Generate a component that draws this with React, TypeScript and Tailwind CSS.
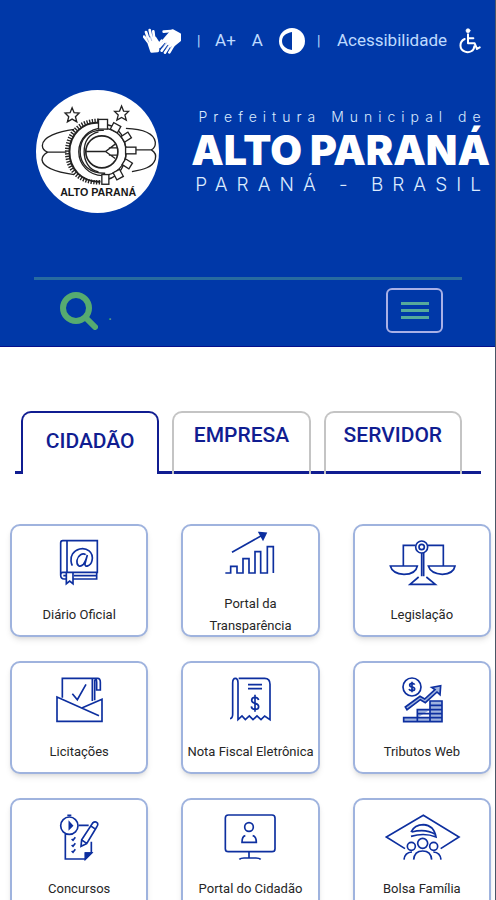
import { useState } from "react";
import type { ReactNode } from "react";
import clsx from "clsx";

interface Service {
  name: string;
  viewBox: string;
  icon: ReactNode;
}

const tabs = ["CIDADÃO", "EMPRESA", "SERVIDOR"];

const services: Service[] = [
  {
    name: "Diário Oficial",
    viewBox: "111 60 252 162",
    icon: (
      <>
        <path d="M188 77H292V172H188Q182 172 182 180V84Q182 77 188 77ZM201 77V172M182 180Q182 192 192 192H198M220 192H290V172M190 182H198M222 182H290M199 174V206L209 198L219 206V174" />
        <path d="M257 119C248 113 234 120 231 136C229 153 240 158 250 148C256 141 260 128 262 120L255 146C253 158 272 155 276 137C282 111 259 97 239 102C219 107 211 124 213 138Q214 147 217 152" />
      </>
    ),
  },
  {
    name: "Portal da Transparência",
    viewBox: "116 27 252 162",
    icon: (
      <>
        <path d="M168 174H184V154H203V174H221V131H239V174H257V110H274V174H294V95H312V174" />
        <path d="M188 112L280 60" />
        <path d="M270 53L290 55L281 73Z" fill="currentColor" />
      </>
    ),
  },
  {
    name: "Legislação",
    viewBox: "628 60 252 162",
    icon: (
      <>
        <circle cx="753" cy="96" r="18" />
        <circle cx="753" cy="96" r="8" />
        <path d="M735 91H698V153M771 91H818V153M659 153H740Q735 178 700 178Q665 176 659 153ZM773 153H853Q849 176 815 178Q780 176 773 153Z" />
        <path d="M753 114V184M759 114V184M744 186L718 208H794L767 186" />
      </>
    ),
  },
  {
    name: "Licitações",
    viewBox: "111 51 252 162",
    icon: (
      <>
        <path d="M187 128V70H277V138M277 70H293Q301 70 301 82V105H290V82Q290 70 282 70M284 74V136" />
        <path d="M297 182L171 126V199H306V133L247 158M217 116L232 134L258 88" />
      </>
    ),
  },
  {
    name: "Nota Fiscal Eletrônica",
    viewBox: "116 51 252 162",
    icon: (
      <>
        <path d="M182 191Q190 190 190 178V84Q190 70 198 70Q206 70 206 84V194L218 183L228 194L240 183L251 194L263 183L275 194L286 183L302 194V88Q302 70 286 70H208M236 89H278M236 101H278" />
        <path d="M268 135Q265 127 257 127Q247 127 247 136Q247 143 257 145Q268 147 268 155Q268 163 257 163Q247 163 246 154M257 119V170" />
      </>
    ),
  },
  {
    name: "Tributos Web",
    viewBox: "628 51 252 162",
    icon: (
      <>
        <circle cx="724" cy="96" r="27" />
        <path d="M732 89Q730 85 724 85Q717 85 717 90Q717 95 724 96Q732 97 732 102Q732 107 724 107Q717 107 715 102M724 80V112" />
        <path
          d="M704 156L748 124L762 132L793 104L783 97L810 92L808 119L799 111L764 143L749 134L709 164Z"
          fill="#9fb3de"
        />
        <path
          d="M699 188H814V200H699ZM740 188V164H778M740 176H814M778 188V138H814V188M778 151H814M778 164H814M740 188V200M778 188V200"
          fill="#9fb3de"
        />
      </>
    ),
  },
  {
    name: "Concursos",
    viewBox: "111 58 252 162",
    icon: (
      <>
        <circle cx="208" cy="108" r="26" />
        <path d="M208 80V76M202 77H214M236 107H266M196 133V208H256L274 190V156M274 190H256V208Z" />
        <path d="M208 98V117L217 108Z" fill="currentColor" />
        <path d="M278 100Q286 93 293 101Q295 106 290 112L260 162L243 170L245 150ZM271 108L284 117M247 152L260 161M215 148L219 152L226 143M215 166L219 170L226 161M215 184L219 188L226 179" />
        <path d="M257 190H274L257 207Z" fill="currentColor" />
      </>
    ),
  },
  {
    name: "Portal do Cidadão",
    viewBox: "116 58 252 162",
    icon: (
      <>
        <rect x="168" y="76" width="149" height="110" rx="9" />
        <circle cx="239" cy="112" r="13" />
        <path d="M228 138Q218 140 218 158H261Q261 140 250 138M239 187V206M210 209Q214 205 224 205H260Q270 205 274 209" />
      </>
    ),
  },
  {
    name: "Bolsa Família",
    viewBox: "628 58 252 162",
    icon: (
      <>
        <path d="M703 177L647 142L758 77L865 142L810 177" />
        <path d="M721 127Q732 105 758 105Q790 107 796 142Q762 128 721 140M723 127Q765 116 794 134" />
        <circle cx="756" cy="161" r="15" />
        <circle cx="722" cy="170" r="12" />
        <circle cx="789" cy="170" r="12" />
        <path d="M729 210Q731 184 756 184Q781 184 783 210M700 210Q702 188 724 187M811 210Q809 188 788 187" />
      </>
    ),
  },
];

function HandsIcon() {
  return (
    <svg viewBox="0 0 114 78" className="h-[26px] w-[38px]" fill="none" stroke="white" strokeLinecap="round">
      <path d="M14 34L26 70L44 68L46 46L36 30Z" fill="white" strokeWidth="9" strokeLinejoin="round" />
      <path d="M14 40L3 26M17 36L9 12M26 34L20 6M34 36L31 10M46 52L56 38" strokeWidth="8" />
      <path d="M64 36L86 56L110 36V20L88 8L72 26Z" fill="white" strokeWidth="9" strokeLinejoin="round" />
      <path d="M66 38L50 56M73 44L56 68M81 50L66 74M90 54L79 73M84 9L62 11" strokeWidth="8" />
      <path d="M70 45L58 60M77 51L65 67M85 56L75 71M12 30L17 42M22 26L26 38" stroke="#0038a8" strokeWidth="1" />
    </svg>
  );
}

function ContrastIcon() {
  return (
    <svg viewBox="0 0 26 26" className="size-[26px]">
      <circle cx="13" cy="13" r="13" fill="white" />
      <path d="M13 4V22C7 21 3 18 3 13S7 5 13 4Z" fill="#0038a8" />
    </svg>
  );
}

function WheelchairIcon() {
  return (
    <svg
      viewBox="0 0 66 78"
      className="h-[26px] w-[22px]"
      fill="none"
      stroke="white"
      strokeWidth="6"
      strokeLinecap="round"
      strokeLinejoin="round"
    >
      <circle cx="27" cy="8" r="6" fill="white" strokeWidth="2" />
      <path d="M27 19V46H47L54 63L62 58M28 31H43" />
      <path d="M17 33C0 41 0 65 18 71C32 76 45 68 46 55" />
    </svg>
  );
}

function CityLogo() {
  const star = "M0 -22L6 -7L21 -6L10 5L14 20L0 12L-14 20L-10 5L-21 -6L-6 -7Z";

  return (
    <svg viewBox="31 31 368 368" className="size-[123px] shrink-0" role="img" aria-label="Brasão de Alto Paraná">
      <circle cx="215" cy="215" r="184" fill="white" />
      <g fill="none" stroke="#222" strokeWidth="4">
        <path d={star} transform="translate(139 106)" />
        <path d={star} transform="translate(287 101)" />
        <path d="M145 149C98 155 51 171 50 197Q50 211 66 217H122M66 217Q49 226 49 240C52 263 94 277 145 284" />
        <path d="M300 146C350 148 384 162 388 187Q389 204 376 210H330M376 210Q393 220 388 238C380 263 352 269 318 275" />
        <path d="M218 129C172 126 131 164 131 216S169 308 224 305" strokeWidth="6" />
        <path d="M218 123C162 122 124 163 124 216S162 311 224 307" strokeWidth="13" strokeDasharray="4 4" />
        <path d="M230 145A71 71 0 1 0 230 287A71 71 0 1 0 230 145" />
        <path d="M234 152C186 149 163 178 163 216S192 281 238 280" />
        <path d="M218 156C185 164 175 190 175 216S188 270 218 276" />
        <path d="M245 135C280 142 300 176 300 216S280 290 245 298" />
        <circle cx="228" cy="216" r="48" strokeWidth="5" />
        <path d="M181 215H239L268 193M239 215L268 236M249 204H275M249 226H275" />
        <rect x="218" y="119" width="27" height="29" fill="white" />
        <rect x="-12" y="-11" width="24" height="22" transform="translate(269 144) rotate(28)" fill="white" />
        <rect x="-12" y="-10" width="24" height="20" transform="translate(301 172) rotate(-32)" fill="white" />
        <rect x="299" y="202" width="31" height="20" fill="white" />
        <rect x="-12" y="-10" width="24" height="20" transform="translate(304 252) rotate(32)" fill="white" />
        <rect x="-11" y="-12" width="22" height="24" transform="translate(277 284) rotate(-28)" fill="white" />
        <rect x="228" y="284" width="21" height="29" fill="white" />
      </g>
      <text
        x="217"
        y="349"
        textAnchor="middle"
        className="fill-neutral-900 font-['Liberation_Sans',sans-serif] text-[32px] font-bold"
      >
        ALTO PARANÁ
      </text>
    </svg>
  );
}

function Header() {
  return (
    <header className="flex h-[347px] flex-col border-b border-[#06108c] bg-[#0038a8] text-white">
      <div className="flex items-center justify-end pt-7 pr-[14px] text-[17px] text-blue-200">
        <button aria-label="Libras">
          <HandsIcon />
        </button>
        <span className="ml-4 w-1 text-sm">|</span>
        <button className="ml-[14px]">A+</button>
        <button className="ml-4">A</button>
        <button aria-label="Contraste" className="ml-4">
          <ContrastIcon />
        </button>
        <span className="ml-3 w-1 text-sm">|</span>
        <a href="#acessibilidade" className="ml-4 flex items-center gap-3">
          Acessibilidade
          <WheelchairIcon />
        </a>
      </div>

      <div className="mt-9 flex items-center justify-between pr-[5px] pl-9">
        <CityLogo />
        <div className="flex flex-col items-center whitespace-nowrap font-['Inter',sans-serif]">
          <span className="pl-1 text-sm leading-4 font-light tracking-[6px] text-blue-100">
            Prefeitura Municipal de
          </span>
          <h1 className="text-[41px] leading-[50px] font-black">ALTO PARANÁ</h1>
          <span className="pl-1 text-[19px] leading-5 font-light tracking-[9px] text-blue-100">PARANÁ - BRASIL</span>
        </div>
      </div>

      <div className="mt-16 mr-[33px] ml-[34px] flex items-center justify-between border-t-[3px] border-[#286b9f] pt-2 pr-[19px] pl-[26px]">
        <button className="flex items-center gap-[10px] text-[#56ab70]" aria-label="Buscar">
          <svg viewBox="0 0 38 38" className="size-[38px]" fill="none" stroke="currentColor" strokeLinecap="round">
            <circle cx="16" cy="16" r="13" strokeWidth="6" />
            <path d="M26 26L35 35" strokeWidth="6" />
          </svg>
          <span className="mt-2">.</span>
        </button>
        <button
          aria-label="Menu"
          className="flex h-[45px] w-[57px] flex-col items-center justify-center gap-1 rounded-md border-2 border-[#a9b0e6]"
        >
          <span className="h-[3px] w-7 bg-[#56a99b]" />
          <span className="h-[3px] w-7 bg-[#56a99b]" />
          <span className="h-[3px] w-7 bg-[#56a99b]" />
        </button>
      </div>
    </header>
  );
}

function ServiceCard({ service }: { service: Service }) {
  return (
    <a
      href="#servico"
      className="flex h-[113px] flex-col items-center justify-center rounded-[10px] border-2 border-[#9fb3de] bg-white shadow-md"
    >
      <svg
        viewBox={service.viewBox}
        className="mb-[15px] h-[54px] w-[84px] shrink-0 text-[#0d2f9f]"
        fill="none"
        stroke="currentColor"
        strokeWidth="5"
      >
        {service.icon}
      </svg>
      <span className="max-w-[132px] text-center text-[13px] leading-[22px] text-neutral-800">{service.name}</span>
    </a>
  );
}

export default function App() {
  const [active, setActive] = useState("CIDADÃO");

  return (
    <div className="min-h-screen overflow-hidden border-r border-gray-600 bg-white font-['Roboto',sans-serif]">
      <Header />

      <main>
        <div
          role="tablist"
          className="mt-16 mr-[14px] ml-[15px] flex gap-[13px] border-b-[3px] border-[#101d91] pr-[19px] pl-[6px]"
        >
          {tabs.map((tab) => (
            <button
              key={tab}
              role="tab"
              aria-selected={active === tab}
              onClick={() => setActive(tab)}
              className={clsx(
                "-mb-[3px] h-[63px] flex-1 rounded-t-[10px] border-x-2 border-t-2 text-[21px] font-medium text-[#101d91]",
                active === tab ? "border-[#101d91] bg-white pb-1" : "border-[#c4c4c4] pb-4",
              )}
            >
              {tab}
            </button>
          ))}
        </div>

        <div className="mt-[50px] grid grid-cols-3 gap-x-[33px] gap-y-6 pr-1 pb-6 pl-[10px]">
          {services.map((service) => (
            <ServiceCard key={service.name} service={service} />
          ))}
        </div>
      </main>
    </div>
  );
}
